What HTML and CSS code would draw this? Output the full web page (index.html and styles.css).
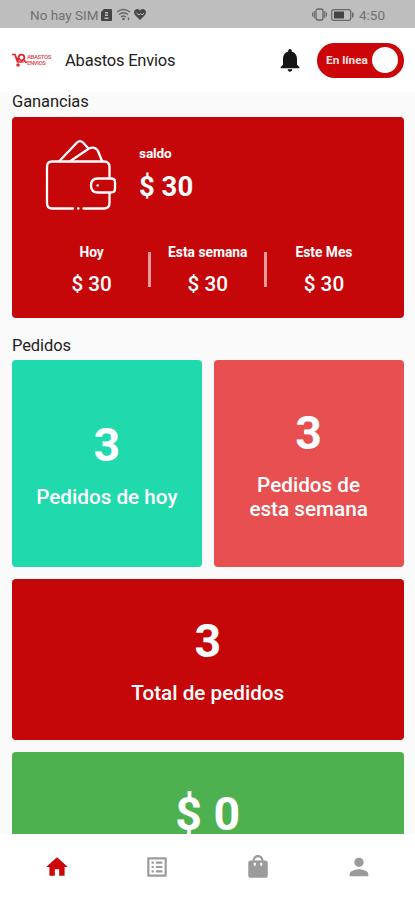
FILE: index.html
```html
<!DOCTYPE html>
<html lang="es">

<head>
  <meta charset="UTF-8">
  <meta name="viewport" content="width=device-width, initial-scale=1.0">
  <title>Abastos Envios</title>
  <link rel="stylesheet" href="styles.css">
</head>

<body>
  <div class="app">
    <div class="status-bar">
      <span class="carrier">No hay SIM</span>
      <svg class="status-sim" width="11" height="12" viewBox="0 0 11 12">
        <path fill="#454545" fill-rule="evenodd" d="M3 0h7q1 0 1 1v10q0 1-1 1H1q-1 0-1-1V3zM4 3v1.500h3V3zM4 5.500V7h3V5.500zM3.500 8.500V10h4V8.500z" />
      </svg>
      <svg class="status-wifi" width="15" height="13" viewBox="0 0 15 13" fill="none" stroke="#666" stroke-width="1.300">
        <path d="M1 4q6.500-5 13 0M3 6.500q4.500-3.500 9 0M5 9q2.500-2 5 0" />
        <circle cx="7.500" cy="11" r=".7" />
        <path d="M12.500 9.500v2.500" stroke-width="1.300" />
      </svg>
      <svg class="status-heart" width="12" height="11" viewBox="0 0 12 11">
        <path fill="#484848" d="M6 11L1 6Q-1 3 1 1q2.500-2 5 .5Q8.500-1 11 1q2 2 0 5z" />
        <path fill="none" stroke="#bebebe" d="M2.500 4L5 6 6.500 4.500 8 6 10 4" />
      </svg>
      <svg class="status-vibrate" width="15" height="13" viewBox="0 0 15 13" fill="none" stroke="#666" stroke-width="1.300">
        <rect x="4" y="1" width="7" height="11" rx="2" />
        <path d="M2.300 3v7M12.700 3v7M.6 4.500v4M14.400 4.500v4" stroke-width="1.100" />
      </svg>
      <svg class="status-battery" width="23" height="12" viewBox="0 0 23 12">
        <rect x=".7" y=".7" width="19" height="10.600" rx="2" fill="none" stroke="#6a6a6a" stroke-width="1.300" />
        <path fill="#444" d="M3 2.500h10v7H3z" />
        <path d="M21.800 3.500v5" stroke="#6a6a6a" stroke-width="1.600" />
      </svg>
      <span class="clock">4:50</span>
    </div>

    <header class="header">
      <div class="logo">
        <svg width="15" height="14" viewBox="0 0 15 14" fill="none" stroke="#e0242c" stroke-width="1.700">
          <path d="M0 1.500h3l2.500 7.500h6M4 4l3 3.500" />
          <circle cx="9.500" cy="4.500" r="2.800" />
          <path d="M12 7l2.500 3" />
          <circle cx="6" cy="12" r=".9" />
        </svg>
        <div class="logo-text">
          <span>ABASTOS</span>
          <span>ENVIOS</span>
        </div>
      </div>
      <h1 class="title">Abastos Envios</h1>
      <svg class="bell" width="28" height="28" viewBox="0 0 24 24" fill="#151515">
        <path d="M12 22c1.100 0 2-.9 2-2h-4c0 1.100.9 2 2 2zm6-6v-5c0-3.070-1.630-5.640-4.500-6.320V4c0-.83-.67-1.500-1.500-1.500s-1.500.67-1.500 1.500v.68C7.640 5.360 6 7.920 6 11v5l-2 2v1h16v-1l-2-2z" />
      </svg>
      <div class="switch">
        <span class="switch-label">En línea</span>
        <span class="switch-knob"></span>
      </div>
    </header>

    <main class="content">
      <h2 class="section-title">Ganancias</h2>
      <section class="earnings">
        <div class="balance">
          <svg class="wallet" width="72" height="72" viewBox="0 0 72 72" fill="none" stroke="#fff" stroke-width="2.300" stroke-linecap="round" stroke-linejoin="round">
            <path d="M28 69.500H7Q2 69.500 2 64V28Q2 22.500 7 22.500H59Q64.500 22.500 64.500 28V39M64.500 54V64Q64.500 69.500 59 69.500H38.500" />
            <path d="M33 69.500h.5" />
            <path d="M14.500 22L32 3.500Q35 .8 38 3.500L43 9" />
            <path d="M25.500 22L44 9.500Q50 7 53 12L57 22" />
            <path d="M53 39.500H66Q70 39.500 70 43V50Q70 53.500 66 53.500H53Q46 53.500 46 46.500T53 39.500z" />
            <path d="M52.500 46.500h.3" />
          </svg>
          <div>
            <p class="balance-label">saldo</p>
            <p class="balance-value">$ 30</p>
          </div>
        </div>
        <div class="periods">
          <div class="period">
            <p class="period-label">Hoy</p>
            <p class="period-value">$ 30</p>
          </div>
          <span class="divider"></span>
          <div class="period">
            <p class="period-label">Esta semana</p>
            <p class="period-value">$ 30</p>
          </div>
          <span class="divider"></span>
          <div class="period">
            <p class="period-label">Este Mes</p>
            <p class="period-value">$ 30</p>
          </div>
        </div>
      </section>

      <h2 class="section-title orders-title">Pedidos</h2>
      <section class="orders">
        <div class="card card-today">
          <p class="card-value">3</p>
          <p class="card-label">Pedidos de hoy</p>
        </div>
        <div class="card card-week">
          <p class="card-value">3</p>
          <p class="card-label">Pedidos de<br>esta semana</p>
        </div>
        <div class="card card-total">
          <p class="card-value">3</p>
          <p class="card-label">Total de pedidos</p>
        </div>
        <div class="card card-cash">
          <p class="card-value">$ 0</p>
        </div>
      </section>
    </main>

    <nav class="bottom-nav">
      <svg class="active" width="26" height="26" viewBox="0 0 24 24">
        <path d="M10 20v-6h4v6h5v-8h3L12 3 2 12h3v8z" />
      </svg>
      <svg width="26" height="26" viewBox="0 0 24 24">
        <path d="M19 5v14H5V5h14m1.100-2H3.900c-.5 0-.9.400-.9.900v16.200c0 .4.400.9.900.9h16.200c.4 0 .9-.5.900-.9V3.900c0-.5-.5-.9-.9-.9zM11 7h6v2h-6V7zm0 4h6v2h-6v-2zm0 4h6v2h-6zM7 7h2v2H7zm0 4h2v2H7zm0 4h2v2H7z" />
      </svg>
      <svg width="26" height="26" viewBox="0 0 24 24">
        <path d="M19 6h-2c0-2.760-2.240-5-5-5S7 3.240 7 6H5c-1.100 0-2 .9-2 2v12c0 1.100.9 2 2 2h14c1.100 0 2-.9 2-2V8c0-1.100-.9-2-2-2zm-9 4c0 .55-.45 1-1 1s-1-.45-1-1V8h2v2zm2-7c1.660 0 3 1.340 3 3H9c0-1.660 1.340-3 3-3zm4 7c0 .55-.45 1-1 1s-1-.45-1-1V8h2v2z" />
      </svg>
      <svg width="28" height="28" viewBox="0 0 24 24">
        <path d="M12 12c2.210 0 4-1.790 4-4s-1.790-4-4-4-4 1.790-4 4 1.790 4 4 4zm0 2c-2.670 0-8 1.340-8 4v2h16v-2c0-2.660-5.330-4-8-4z" />
      </svg>
    </nav>
  </div>
</body>

</html>
```
FILE: styles.css
```css
* {
  margin: 0;
  padding: 0;
  box-sizing: border-box;
}

body {
  font-family: Roboto, "Liberation Sans", sans-serif;
  background-color: #fafafa;
  color: #222;
}

.app {
  height: 900px;
  display: flex;
  flex-direction: column;
  overflow: hidden;
}

.status-bar {
  height: 28px;
  flex-shrink: 0;
  display: flex;
  align-items: center;
  padding: 1px 29px 0 30px;
  background-color: #bebebe;
  color: #707070;
  font-size: 13.5px;
}

.carrier {
  width: 71px;
  white-space: nowrap;
}

.status-wifi {
  margin-left: 4px;
}

.status-heart {
  margin-left: 3px;
}

.status-vibrate {
  margin-left: auto;
}

.status-battery {
  margin-left: 4px;
}

.clock {
  width: 27px;
  margin-left: 5px;
}

.header {
  height: 64px;
  flex-shrink: 0;
  display: flex;
  align-items: center;
  padding: 0 11px 0 12px;
  background-color: #fff;
}

.logo {
  width: 53px;
  display: flex;
  align-items: center;
}

.logo-text {
  display: flex;
  flex-direction: column;
  color: #e2454b;
  font-size: 6px;
  font-weight: 500;
  line-height: 6px;
  letter-spacing: -0.4px;
}

.title {
  font-size: 16.5px;
  font-weight: 400;
  letter-spacing: -0.2px;
}

.bell {
  margin-left: auto;
}

.switch {
  width: 87px;
  height: 35px;
  margin-left: 13px;
  padding: 0 6px 0 9px;
  display: flex;
  align-items: center;
  justify-content: space-between;
  border-radius: 18px;
  background-color: #cb0508;
}

.switch-label {
  color: #fbe0e0;
  font-size: 11.8px;
  font-weight: 700;
}

.switch-knob {
  width: 26px;
  height: 26px;
  border-radius: 50%;
  background-color: #fff;
}

.content {
  flex: 1;
  min-height: 0;
  overflow: hidden;
  padding: 0 11.5px 0 12px;
}

.section-title {
  height: 25px;
  font-size: 16.5px;
  font-weight: 400;
  line-height: 20px;
  letter-spacing: -0.1px;
}

.earnings {
  height: 201px;
  padding: 22px 23px 0;
  border-radius: 4px;
  background-color: #c60709;
  color: #fff;
}

.balance {
  display: flex;
  padding-left: 10px;
}

.wallet {
  margin-right: 22px;
}

.balance-label {
  margin-top: 6px;
  font-size: 13.6px;
  font-weight: 700;
  line-height: 16px;
  letter-spacing: -0.1px;
}

.balance-value {
  margin-top: 9px;
  font-size: 27.5px;
  font-weight: 700;
  line-height: 34px;
}

.periods {
  display: flex;
  margin-top: 33px;
}

.period {
  flex: 1 1 0;
  min-width: 0;
  text-align: center;
  white-space: nowrap;
}

.period-label {
  font-size: 13.8px;
  font-weight: 700;
  line-height: 16px;
}

.period-value {
  margin-top: 12px;
  font-size: 20.7px;
  font-weight: 500;
  line-height: 24px;
}

.divider {
  width: 3px;
  height: 35px;
  margin-top: 8px;
  background-color: #e69c9d;
}

.orders-title {
  height: 42px;
  padding-top: 18px;
}

.orders {
  display: grid;
  grid-template-columns: 1fr 1fr;
  grid-template-rows: 207px 161px 161px;
  gap: 12px;
}

.card {
  display: flex;
  flex-direction: column;
  align-items: center;
  justify-content: center;
  padding-bottom: 1px;
  border-radius: 4px;
  color: #fff;
  text-align: center;
}

.card-value {
  font-size: 46.5px;
  font-weight: 700;
  line-height: 56px;
}

.card-label {
  margin-top: 12px;
  font-size: 20.7px;
  font-weight: 500;
  line-height: 24px;
}

.card-today {
  background-color: #20d9ad;
}

.card-week {
  background-color: #e84f50;
}

.card-total {
  grid-column: span 2;
  background-color: #c60709;
}

.card-cash {
  grid-column: span 2;
  justify-content: flex-start;
  padding-top: 34px;
  background-color: #4db150;
}

.bottom-nav {
  height: 66px;
  flex-shrink: 0;
  display: flex;
  align-items: center;
  justify-content: space-between;
  padding: 0 42px 0 44px;
  background-color: #fff;
  fill: #9b9b9b;
}

.bottom-nav .active {
  fill: #cb0508;
}
```
